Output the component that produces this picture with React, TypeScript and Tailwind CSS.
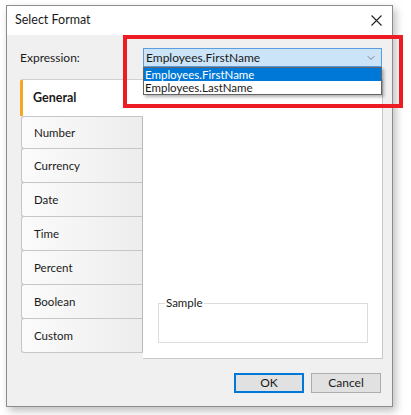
import { ChevronDown } from 'lucide-react'

const tabs = ['Number', 'Currency', 'Date', 'Time', 'Percent', 'Boolean', 'Custom']

const App = () => {
  return (
    <div className="relative w-[411px] h-[415px] bg-white overflow-hidden text-[#1a1a1a] [font-family:'Segoe_UI',Lato,sans-serif] text-[12px]">
      {/* Dialog */}
      <div className="ml-[6px] mt-[5px] w-[387px] h-[402px] flex flex-col border border-[#8c8c8c] bg-[#f0f0f0] shadow-[3px_4px_8px_rgba(0,0,0,0.25)]">
        {/* Title bar */}
        <div className="h-[29px] bg-white flex items-center justify-between pl-[8px] pr-[10px]">
          <span className="text-[12.5px] leading-none">Select Format</span>
          <svg width="11" height="11" viewBox="0 0 11 11">
            <path d="M0.5 0.5 L10.5 10.5 M10.5 0.5 L0.5 10.5" stroke="#222" strokeWidth="1.1" />
          </svg>
        </div>

        {/* Body */}
        <div className="flex-1 flex flex-col pl-[13px] pt-[13px]">
          {/* Expression row */}
          <div className="flex items-center h-[19px]">
            <span className="w-[123px] text-[12px]">Expression:</span>
            <div className="w-[239px] h-[19px] flex items-center justify-between bg-[#cce4f7] border border-[#5a9ee0] pl-[2px] pr-[4px]">
              <span className="leading-none">Employees.FirstName</span>
              <ChevronDown className="w-[12px] h-[12px] text-[#5f5f5f]" strokeWidth={1.5} />
            </div>
          </div>

          {/* Tabs + panel */}
          <div className="flex mt-[12px] h-[280px]">
            <div className="w-[123px] flex flex-col">
              <div className="h-[37px] flex items-center pl-[10px] bg-white border-l-[3px] border-[#f5a623] border-t border-t-[#d0d0d0] rounded-tl-[3px] font-bold text-[12.5px]">
                General
              </div>
              {tabs.map((t, i) => (
                <div
                  key={t}
                  className={`${i === 0 ? 'h-[33px]' : 'h-[35px] -mt-px'} flex items-center pl-[12px] ml-[1px] bg-gradient-to-r from-[#fbfbfb] to-[#ededed] border border-[#c6c6c6] border-r-[#b8b8b8] rounded-l-[3px] text-[11.5px]`}
                >
                  {t}
                </div>
              ))}
            </div>
            <div className="w-[240px] h-[280px] bg-white border-r border-b border-[#c8c8c8] flex flex-col">
              <div className="mt-[224px] ml-[15px] w-[210px] h-[40px] border border-[#dcdcdc] relative">
                <span className="absolute -top-[7px] left-[6px] bg-white px-[1px] text-[11.5px] leading-none">Sample</span>
              </div>
            </div>
          </div>

          {/* Buttons */}
          <div className="flex justify-end gap-[7px] mt-[14px] pr-[11px]">
            <button className="w-[70px] h-[20px] bg-[#e1e1e1] border-2 border-[#0078d7] text-[12px] leading-none">OK</button>
            <button className="w-[70px] h-[20px] bg-[#e1e1e1] border border-[#adadad] text-[12px] leading-none">Cancel</button>
          </div>
        </div>
      </div>

      {/* Open dropdown list */}
      <div className="absolute left-[143px] top-[67px] w-[239px] h-[28px] bg-white border border-[#646464] shadow-[2px_2px_3px_rgba(0,0,0,0.3)] flex flex-col text-[11.5px]">
        <div className="h-[13px] bg-[#0078d7] text-white flex items-center pl-[1px] leading-[13px]">Employees.FirstName</div>
        <div className="h-[13px] flex items-center pl-[1px] leading-[13px]">Employees.LastName</div>
      </div>

      {/* Red highlight annotation */}
      <div className="absolute left-[123px] top-[35px] w-[280px] h-[73px] border-[4px] border-[#ed1c24]" />
    </div>
  )
}

export default App
